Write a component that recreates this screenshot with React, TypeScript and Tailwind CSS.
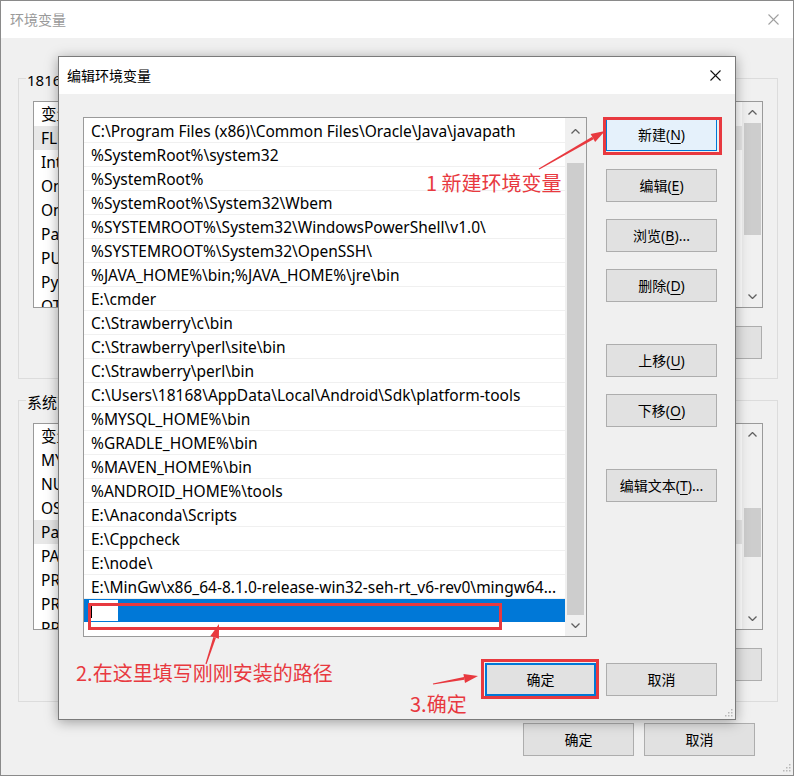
import React from "react";

const RED = "#e8393f";

function Chevron({ up }: { up?: boolean }) {
  return (
    <svg width="9" height="5" viewBox="0 0 9 5" className="block">
      <polyline
        points={up ? "0.5,4.5 4.5,0.5 8.5,4.5" : "0.5,0.5 4.5,4.5 8.5,0.5"}
        fill="none"
        stroke="#606060"
        strokeWidth="1.3"
      />
    </svg>
  );
}

function CloseX({ color }: { color: string }) {
  return (
    <svg width="11" height="11" viewBox="0 0 11 11" className="block">
      <line x1="0.5" y1="0.5" x2="10.5" y2="10.5" stroke={color} strokeWidth="1.1" />
      <line x1="10.5" y1="0.5" x2="0.5" y2="10.5" stroke={color} strokeWidth="1.1" />
    </svg>
  );
}

function Grip() {
  const pts = [
    [7, 1],
    [4, 4],
    [7, 4],
    [1, 7],
    [4, 7],
    [7, 7],
  ];
  return (
    <svg width="9" height="9" viewBox="0 0 9 9" className="block">
      {pts.map(([x, y], i) => (
        <rect key={i} x={x} y={y} width="1.5" height="1.5" fill="#b8b8b8" />
      ))}
    </svg>
  );
}

function WinBtn({
  text,
  accel,
  after = "",
  className = "bg-[#e1e1e1] border border-[#adadad]",
}: {
  text: string;
  accel?: string;
  after?: string;
  className?: string;
}) {
  return (
    <div
      className={`h-[33px] w-[111px] shrink-0 flex items-center justify-center text-[14px] leading-[20px] text-black ${className}`}
    >
      <span className="whitespace-nowrap">
        {text}
        {accel ? (
          <>
            (<span className="underline underline-offset-[3px]">{accel}</span>)
          </>
        ) : null}
        {after}
      </span>
    </div>
  );
}

function Arrow({ x1, y1, x2, y2 }: { x1: number; y1: number; x2: number; y2: number }) {
  const dx = x2 - x1;
  const dy = y2 - y1;
  const len = Math.hypot(dx, dy);
  const ux = dx / len;
  const uy = dy / len;
  const hl = 14;
  const hw = 4.5;
  const bx = x2 - ux * hl;
  const by = y2 - uy * hl;
  const px = -uy;
  const py = ux;
  const tw = 0.6;
  const nw = 1.4;
  const body = `${x1 + px * tw},${y1 + py * tw} ${bx + px * nw},${by + py * nw} ${bx - px * nw},${by - py * nw} ${x1 - px * tw},${y1 - py * tw}`;
  const head = `${x2},${y2} ${bx + px * hw},${by + py * hw} ${bx - px * hw},${by - py * hw}`;
  return (
    <g fill={RED}>
      <polygon points={body} />
      <polygon points={head} />
    </g>
  );
}

const paths = [
  "C:\\Program Files (x86)\\Common Files\\Oracle\\Java\\javapath",
  "%SystemRoot%\\system32",
  "%SystemRoot%",
  "%SystemRoot%\\System32\\Wbem",
  "%SYSTEMROOT%\\System32\\WindowsPowerShell\\v1.0\\",
  "%SYSTEMROOT%\\System32\\OpenSSH\\",
  "%JAVA_HOME%\\bin;%JAVA_HOME%\\jre\\bin",
  "E:\\cmder",
  "C:\\Strawberry\\c\\bin",
  "C:\\Strawberry\\perl\\site\\bin",
  "C:\\Strawberry\\perl\\bin",
  "C:\\Users\\18168\\AppData\\Local\\Android\\Sdk\\platform-tools",
  "%MYSQL_HOME%\\bin",
  "%GRADLE_HOME%\\bin",
  "%MAVEN_HOME%\\bin",
  "%ANDROID_HOME%\\tools",
  "E:\\Anaconda\\Scripts",
  "E:\\Cppcheck",
  "E:\\node\\",
  "E:\\MinGw\\x86_64-8.1.0-release-win32-seh-rt_v6-rev0\\mingw64...",
];

const userVars = [
  "变量",
  "FLUTTER_STORAGE_BASE_URL",
  "IntelliJ IDEA",
  "OneDrive",
  "OneDriveConsumer",
  "Path",
  "PUB_HOSTED_URL",
  "PyCharm",
  "OTHER",
];

const sysVars = [
  "变量",
  "MYSQL_HOME",
  "NUMBER_OF_PROCESSORS",
  "OS",
  "Path",
  "PATHEXT",
  "PROCESSOR_ARCHITECTURE",
  "PROCESSOR_IDENTIFIER",
  "PROCESSOR_LEVEL",
];

function BgList({ items, selected, sys }: { items: string[]; selected: number; sys?: boolean }) {
  return (
    <div className="h-[207px] w-[730px] bg-white border border-[#9a9a9a] flex overflow-hidden">
      <div className="flex-1 flex flex-col overflow-hidden">
        {items.map((t, i) => (
          <div
            key={i}
            className={`h-[24px] shrink-0 flex items-center pl-[7px] pt-[2px] text-[15.5px] whitespace-nowrap ${
              i === selected ? "bg-[#e8e8e8]" : ""
            }`}
          >
            {t}
          </div>
        ))}
      </div>
      <div className="w-[20px] bg-[#f0f0f0] flex flex-col items-center">
        <div className="h-[20px] flex items-center justify-center">
          <Chevron up />
        </div>
        {sys ? (
          <div className="mt-[64px] w-[17px] h-[49px] bg-[#cdcdcd]" />
        ) : (
          <div className="mt-[1px] w-[17px] h-[112px] bg-[#cdcdcd]" />
        )}
        <div className="flex-1" />
        <div className="h-[22px] flex items-center justify-center">
          <Chevron />
        </div>
      </div>
    </div>
  );
}

function GroupBox({ label, items, selected, sys }: { label: string; items: string[]; selected: number; sys?: boolean }) {
  return (
    <div className={`border border-[#dcdcdc] pl-[14px] pr-[14px] ${sys ? "mt-[21px] pb-[20px]" : "mt-[40px] pb-[19px]"}`}>
      <div className="-mt-[11px] ml-[-7px] w-fit h-[20px] px-[1px] bg-[#f0f0f0] text-[15px] leading-[24px] text-black whitespace-nowrap">
        {label}
      </div>
      <div className="mt-[13px]">
        <BgList items={items} selected={selected} sys={sys} />
      </div>
      <div className="mt-[18px] flex justify-end gap-[10px] pr-[1px]">
        <WinBtn text="新建" accel="N" after="..." />
        <WinBtn text="编辑" accel="I" after="..." />
        <WinBtn text="删除" accel="L" />
      </div>
    </div>
  );
}

export default function App() {
  return (
    <div className="relative w-[794px] h-[776px] overflow-hidden bg-[#f0f0f0] border border-[#8a8a8a] font-['Noto_Sans','Noto_Sans_CJK_SC',sans-serif] text-black">
      {/* background window title */}
      <div className="h-[37px] bg-white flex items-center justify-between pl-[9px] pr-[14px]">
        <span className="text-[14px] text-[#9a9a9a]">环境变量</span>
        <CloseX color="#a0a0a0" />
      </div>
      {/* background window body */}
      <div className="pl-[17px] pr-[15px]">
        <GroupBox label="18168 的用户变量" items={userVars} selected={1} />
        <GroupBox label="系统变量" items={sysVars} selected={4} sys />
        <div className="mt-[21px] flex justify-end gap-[10px] pr-[23px]">
          <WinBtn text="确定" />
          <WinBtn text="取消" />
        </div>
      </div>
      <div className="absolute right-[2px] bottom-[3px]">
        <Grip />
      </div>

      {/* dialog */}
      <div className="absolute left-[57px] top-[55px] w-[678px] h-[664px] bg-[#f0f0f0] border border-[#7a7a7a] shadow-[0_2px_12px_rgba(0,0,0,0.35)] flex flex-col">
        <div className="h-[37px] shrink-0 bg-white flex items-center justify-between pl-[8px] pr-[14px]">
          <span className="text-[14px] text-black">编辑环境变量</span>
          <CloseX color="#111111" />
        </div>
        <div className="flex pl-[24px] pt-[23px]">
          <div className="w-[504px] h-[520px] bg-white border border-[#9a9a9a] flex">
            <div className="flex-1 pt-[1px] flex flex-col overflow-hidden">
              {paths.map((p, i) => (
                <div
                  key={i}
                  className="h-[24px] shrink-0 flex items-center pl-[7px] pt-[3px] border-b border-[#f0f0f0] text-[15.5px] whitespace-nowrap overflow-hidden"
                >
                  {p}
                </div>
              ))}
              <div className="h-[23px] shrink-0 bg-[#0078d7] flex items-center pl-[5px]">
                <div className="h-[21px] w-[29px] bg-white flex items-center pl-[2px]">
                  <div className="w-[1px] h-[15px] bg-black" />
                </div>
              </div>
            </div>
            <div className="w-[21px] bg-[#f0f0f0] flex flex-col items-center">
              <div className="h-[27px] flex items-center justify-center">
                <Chevron up />
              </div>
              <div className="mt-[18px] w-[17px] h-[452px] bg-[#cdcdcd]" />
              <div className="flex-1 flex items-center justify-center">
                <Chevron />
              </div>
            </div>
          </div>
          <div className="ml-[19px] mt-[1px] flex flex-col">
            <WinBtn text="新建" accel="N" className="bg-[#e5f1fb] border border-[#0078d7]" />
            <div className="mt-[18px]">
              <WinBtn text="编辑" accel="E" />
            </div>
            <div className="mt-[17px]">
              <WinBtn text="浏览" accel="B" after="..." />
            </div>
            <div className="mt-[17px]">
              <WinBtn text="删除" accel="D" />
            </div>
            <div className="mt-[42px]">
              <WinBtn text="上移" accel="U" />
            </div>
            <div className="mt-[17px]">
              <WinBtn text="下移" accel="O" />
            </div>
            <div className="mt-[42px]">
              <WinBtn text="编辑文本" accel="T" after="..." />
            </div>
          </div>
        </div>
        <div className="mt-[26px] flex justify-end gap-[10px] pr-[18px]">
          <WinBtn text="确定" className="bg-[#e1e1e1] border-2 border-[#0078d7]" />
          <WinBtn text="取消" />
        </div>
        <div className="absolute right-[2px] bottom-[2px]">
          <Grip />
        </div>
      </div>

      {/* annotations */}
      <div className="absolute left-[602px] top-[116px] w-[119px] h-[38px] border-[3px] border-[#e8393f]" />
      <div className="absolute left-[87px] top-[602px] w-[414px] h-[27px] border-[3px] border-[#e8393f]" />
      <div className="absolute left-[480px] top-[658px] w-[118px] h-[40px] border-[3px] border-[#e8393f]" />
      <div className="absolute left-[425px] top-[172px] text-[20px] leading-[20px] text-[#e8393f] font-['Noto_Sans_CJK_SC',sans-serif] whitespace-nowrap">
        1 新建环境变量
      </div>
      <div className="absolute left-[75px] top-[662px] text-[20px] leading-[20px] text-[#e8393f] font-['Noto_Sans_CJK_SC',sans-serif] whitespace-nowrap">
        2.在这里填写刚刚安装的路径
      </div>
      <div className="absolute left-[409px] top-[693px] text-[20px] leading-[20px] text-[#e8393f] font-['Noto_Sans_CJK_SC',sans-serif] whitespace-nowrap">
        3.确定
      </div>
      <svg className="absolute left-0 top-0 pointer-events-none" width="794" height="776" viewBox="0 0 794 776">
        <Arrow x1={538} y1={168} x2={604} y2={130} />
        <Arrow x1={205} y1={663} x2={218} y2={623} />
        <Arrow x1={432} y1={683} x2={477} y2={675} />
      </svg>
    </div>
  );
}
